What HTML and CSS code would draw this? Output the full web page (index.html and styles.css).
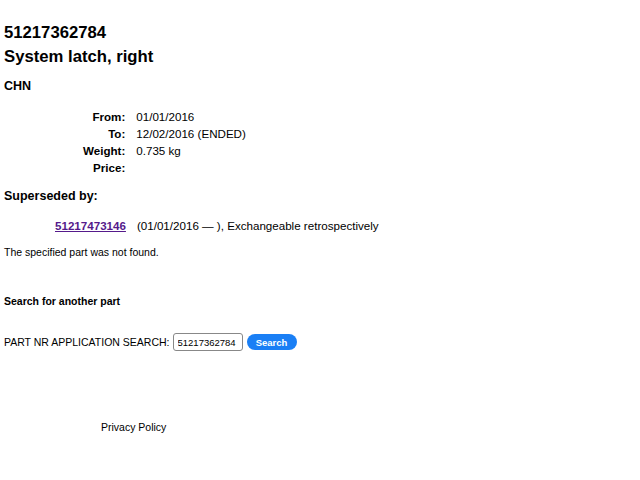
FILE: index.html
```html
<!DOCTYPE html>
<html>
<head>
<meta charset="utf-8">
<link rel="stylesheet" href="styles.css">
</head>
<body>
<div class="page">
  <h1 class="title">51217362784</h1>
  <h1 class="title name">System latch, right</h1>
  <h3 class="market">CHN</h3>
  <table class="details">
    <tr><th>From:</th><td>01/01/2016</td></tr>
    <tr><th>To:</th><td>12/02/2016 (ENDED)</td></tr>
    <tr><th>Weight:</th><td>0.735 kg</td></tr>
    <tr><th>Price:</th><td></td></tr>
  </table>
  <h3 class="section">Superseded by:</h3>
  <div class="super-row">
    <a class="part-link" href="#">51217473146</a>
    <span class="super-info">(01/01/2016 — ), Exchangeable retrospectively</span>
  </div>
  <p class="notfound">The specified part was not found.</p>
  <h4 class="search-title">Search for another part</h4>
  <form class="search-form">
    <span class="search-label">PART NR APPLICATION SEARCH:</span>
    <input class="search-input" type="text" value="51217362784">
    <button class="search-btn" type="button">Search</button>
  </form>
  <div class="footer"><span>Privacy Policy</span></div>
</div>
</body>
</html>
```

FILE: styles.css
```css
html, body { margin: 0; padding: 0; background: #fff; }
body { font-family: "Liberation Sans", Arial, sans-serif; color: #000; }
.page { padding: 0 4px; }
.title { font-size: 16.7px; font-weight: bold; margin: 0; line-height: 24px; }
.title:first-child { padding-top: 21px; }
.market { font-size: 12.5px; margin: 9px 0 0; line-height: 16px; }
.details { margin: 14px 0 0 79px; border-collapse: collapse; font-size: 11.6px; }
.details th { text-align: right; font-weight: bold; padding: 0 11px 0 0; height: 17px; line-height: 17px; }
.details td { padding: 0; line-height: 17px; }
.section { font-size: 12.5px; margin: 12px 0 0; line-height: 16px; }
.super-row { margin: 14px 0 0 51px; font-size: 11.6px; line-height: 16px; display: flex; gap: 11px; }
.part-link { color: #551a8b; font-weight: bold; text-decoration: underline; }
.notfound { font-size: 10.5px; margin: 11px 0 0; line-height: 14px; }
.search-title { font-size: 10.5px; margin: 35px 0 0; line-height: 14px; }
.search-form { margin: 25px 0 0; display: flex; align-items: center; font-size: 10.5px; }
.search-label { margin-right: 3px; }
.search-input { width: 60px; height: 14px; font-family: "Liberation Sans", Arial, sans-serif; font-size: 9.5px; padding: 1px 4px; border: 1px solid #888; border-radius: 3px; margin: 0 4px 0 0; }
.search-btn { background: #1a7ff5; color: #fff; font-family: "Liberation Sans", Arial, sans-serif; font-weight: bold; font-size: 9.5px; border: none; border-radius: 8px; width: 50px; height: 16px; padding: 0; }
.footer { margin: 69px 0 0 97px; font-size: 10.5px; line-height: 14px; }
```
